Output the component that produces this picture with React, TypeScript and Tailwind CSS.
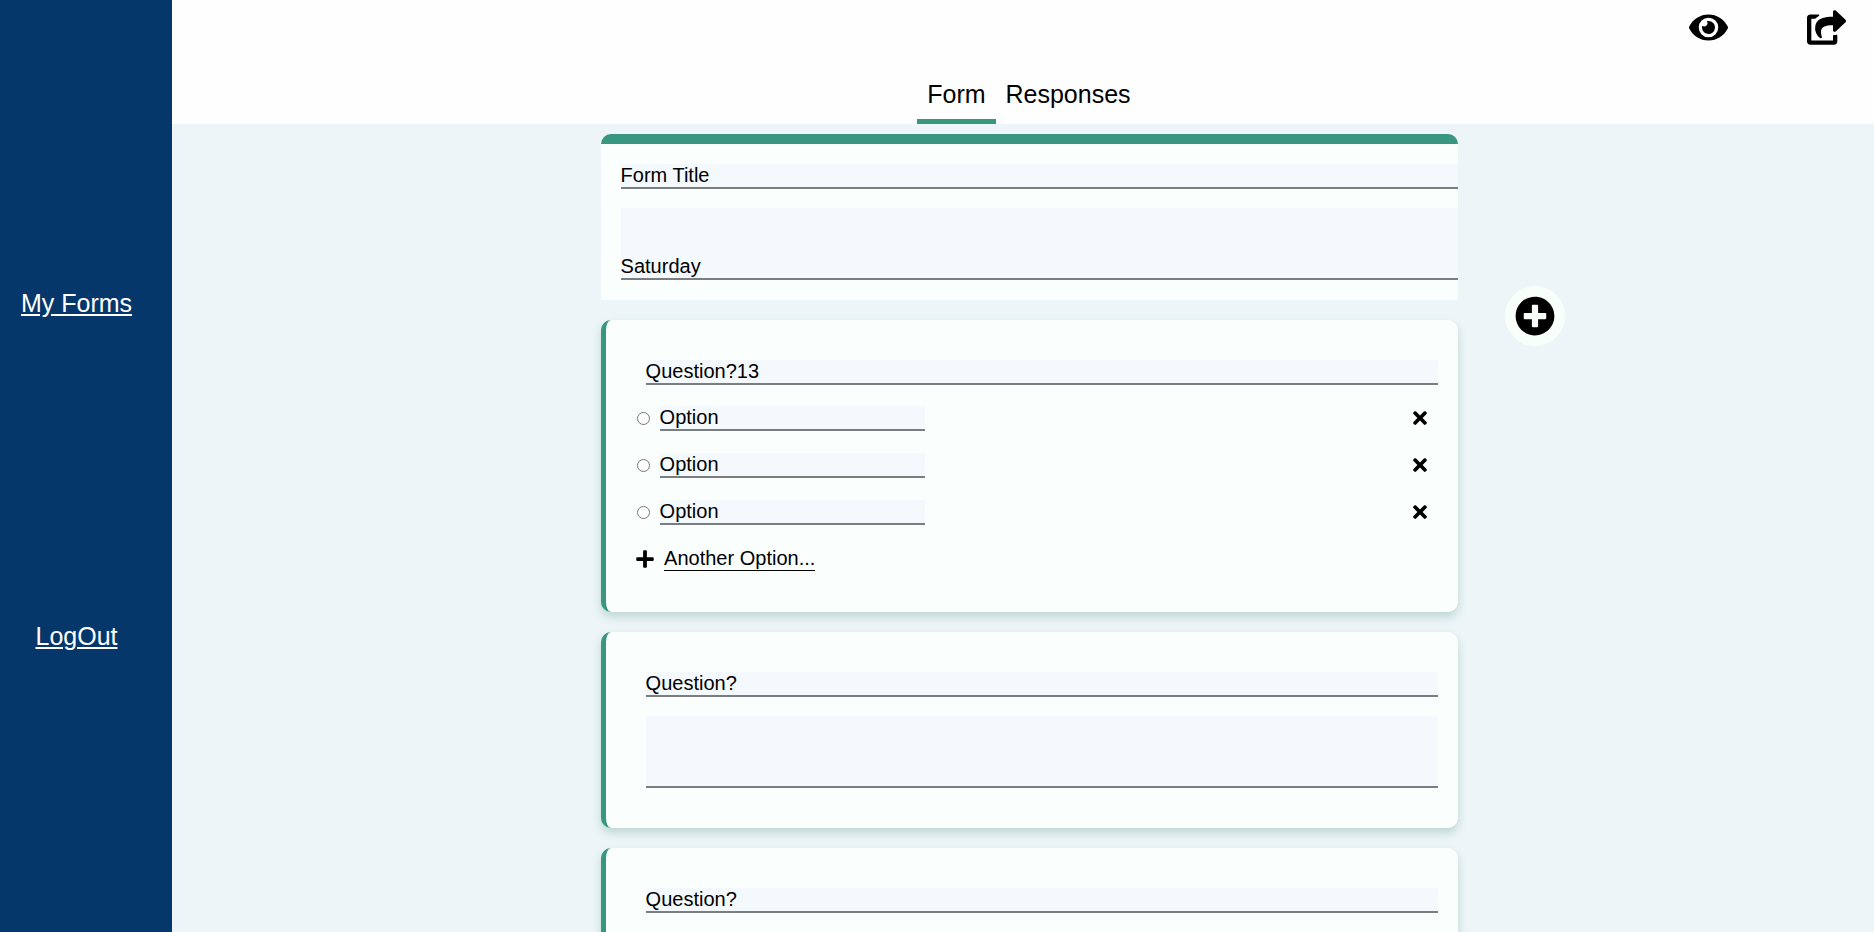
import type { ReactNode } from "react";
import { FaEye, FaPlus, FaPlusCircle, FaShareSquare, FaTimes } from "react-icons/fa";

const font = "font-['Liberation_Sans',Arial,sans-serif]";

function Field({ value, className = "" }: { value: string; className?: string }) {
  return (
    <div className={`flex items-end border-b-2 border-[#7b7e80] bg-[#f4f9fd] text-xl leading-[23px] ${className}`}>
      {value}
    </div>
  );
}

function Option({ label }: { label: string }) {
  return (
    <div className="flex h-[25px] items-center">
      <span className="mr-2.5 size-[13px] rounded-full border border-[#767676] bg-white" />
      <Field value={label} className="h-[25px] w-[265px]" />
      <FaTimes className="mr-[8px] mb-px ml-auto size-5" />
    </div>
  );
}

function Card({ title, children, className = "" }: { title: string; children?: ReactNode; className?: string }) {
  return (
    <section
      className={`shrink-0 rounded-[10px] border-l-[5px] border-[#39967f] bg-[#fafffd] pt-10 pr-5 shadow-[0_5px_10px_rgba(57,130,107,0.26)] ${className}`}
    >
      <Field value={title} className="ml-10 h-[25px]" />
      {children}
    </section>
  );
}

export default function App() {
  return (
    <div className={`flex h-[932px] overflow-hidden bg-[#edf5f8] text-black ${font}`}>
      <aside className="flex w-[172px] shrink-0 flex-col items-center gap-[305px] bg-[#06376b] pt-[289px] pr-[19px] text-[25px] leading-7 text-white">
        <a className="underline">My Forms</a>
        <a className="underline">LogOut</a>
      </aside>
      <div className="flex min-w-0 flex-1 flex-col">
        <header className="flex h-[124px] shrink-0 flex-col bg-[#fefefe]">
          <div className="flex justify-end gap-[79px] pt-[8px] pr-[28px]">
            <FaEye className="size-[39px]" />
            <FaShareSquare className="size-[39px]" />
          </div>
          <nav className="mt-auto flex pl-[745px] text-[25px] leading-7">
            <span className="flex h-[44px] w-[79px] justify-center border-b-5 border-[#39967f]">Form</span>
            <span className="h-[44px] pl-[9.5px]">Responses</span>
          </nav>
        </header>
        <main className="flex min-h-0 flex-1 items-start pt-2.5 pl-[428.6px]">
          <div className="flex w-[857px] shrink-0 flex-col gap-5">
            <section className="h-[166px] rounded-t-[10px] border-t-10 border-[#39967f] bg-[#fafffd] pt-5 pl-5">
              <Field value="Form Title" className="h-[25px]" />
              <Field value="Saturday" className="mt-[19px] h-[72px]" />
            </section>
            <Card title="Question?13" className="h-[292px]">
              <div className="mt-[21px] ml-[31px] flex flex-col gap-[22px]">
                <Option label="Option" />
                <Option label="Option" />
                <Option label="Option" />
                <div className="-mt-px flex h-[25px] items-center">
                  <FaPlus className="-ml-[1.5px] size-5" />
                  <span className="ml-[9px] border-b border-black text-xl leading-6">Another Option...</span>
                </div>
              </div>
            </Card>
            <Card title="Question?" className="h-[196px]">
              <Field value="" className="mt-[19px] ml-10 h-[72px]" />
            </Card>
            <Card title="Question?" className="h-[196px]">
              <Field value="" className="mt-[19px] ml-10 h-[72px]" />
            </Card>
          </div>
          <button className="mt-[152px] ml-[47px] flex size-[60px] items-center justify-center rounded-full bg-[#f8fffa]">
            <FaPlusCircle className="size-10" />
          </button>
        </main>
      </div>
    </div>
  );
}
